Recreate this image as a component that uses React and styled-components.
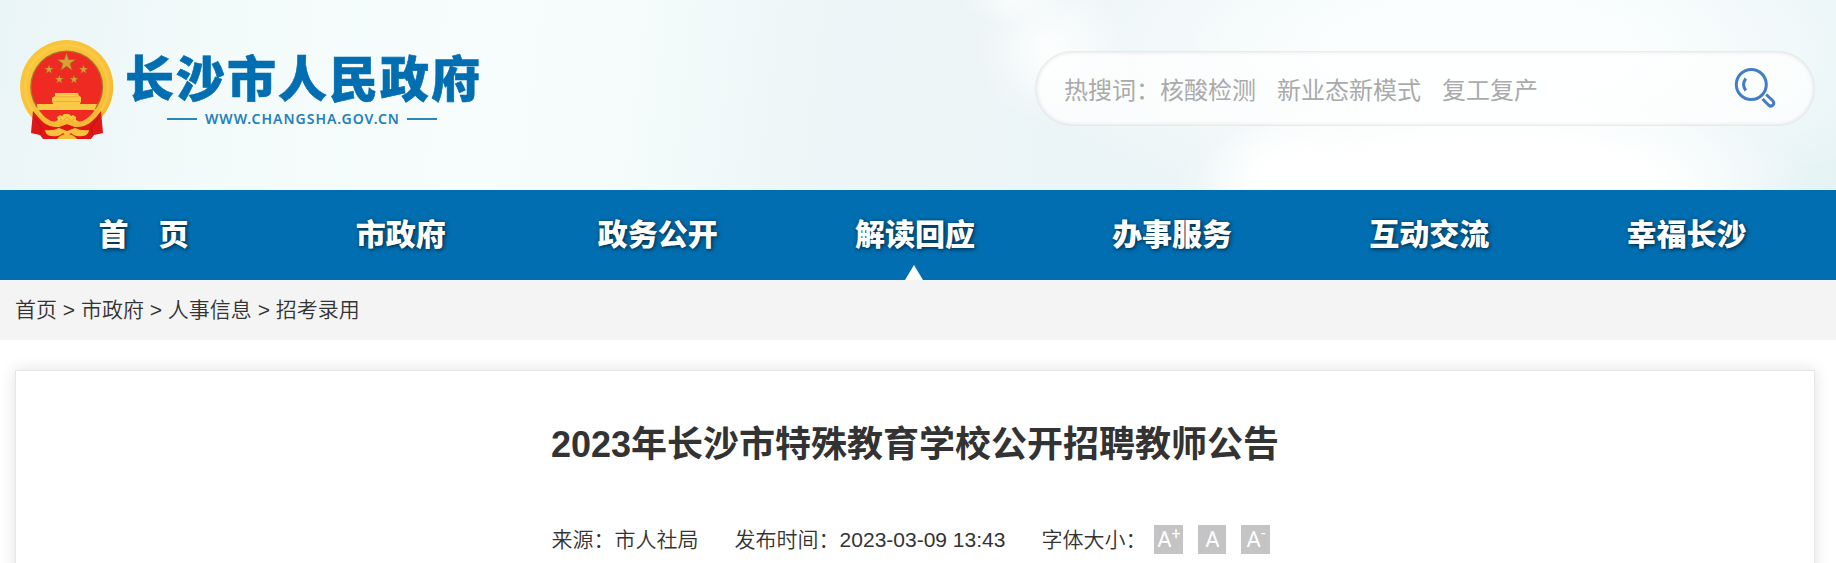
import React from 'react'
import styled, { createGlobalStyle } from 'styled-components';

const navItems = ["首\u3000页", "市政府", "政务公开", "解读回应", "办事服务", "互动交流", "幸福长沙"]
const crumbs = ["首页", "市政府", "人事信息", "招考录用"]
const hotWords = ["核酸检测", "新业态新模式", "复工复产"]
const star = "0,-10 2.3,-3.1 9.5,-3.1 3.7,1.2 5.9,8.1 0,3.9 -5.9,8.1 -3.7,1.2 -9.5,-3.1 -2.3,-3.1"

const Emblem = () => (
  <svg width="94" height="99" viewBox="0 0 94 99">
    <defs>
      <linearGradient id="gold" x1="0" y1="0" x2="1" y2="1">
        <stop offset="0" stopColor="#fbc838" />
        <stop offset="0.5" stopColor="#f8c23a" />
        <stop offset="1" stopColor="#f5b62c" />
      </linearGradient>
    </defs>
    <circle cx="46.700" cy="46.700" r="46.600" fill="url(#gold)" />
    <circle cx="46.700" cy="46.700" r="41.5" fill="none" stroke="#fbd055" strokeWidth="3" opacity="0.5" />
    <circle cx="46.700" cy="47" r="36.5" fill="#a8742a" />
    <circle cx="46.700" cy="47" r="35.2" fill="#ee2a22" />
    <g fill="#d9a038" stroke="#a0691f" strokeWidth="0.8">
      <polygon points={star} transform="translate(46.5 22.5) scale(0.98)" />
      <polygon points={star} transform="translate(29 29.5) scale(0.48)" />
      <polygon points={star} transform="translate(63.5 29.5) scale(0.48)" />
      <polygon points={star} transform="translate(39.3 39.5) scale(0.46)" />
      <polygon points={star} transform="translate(54 39.5) scale(0.46)" />
    </g>
    <path d="M35 53h23l1 3 2 1v4l-1 3h17l-2.500 6h-57L17 64h16l-1-3v-3l3-2z" fill="#fcc947" />
    <path d="M35 56.800h23M33 61.500h27" stroke="#e5a035" strokeWidth="0.7" />
    <path d="M20 71h54Q68 80 59 82q-4-8-12-8t-12 8Q25 80 20 71z" fill="#ee2a22" />
    <path d="M37 77l3-2 2 1 2-2h5l2 2 2-1 3 2v3l3 2-4 2-8 3-8-3-4-2 3-2z" fill="#fbc83c" />
    <path d="M40 79l3 2 4-4 4 4 3-2" fill="none" stroke="#d99624" strokeWidth="0.8" />
    <path d="M13 71q10 14 25 16l9-3 9 3q16-2 25-16l2 22-9 2-3 4H23l-3-4-9-2z" fill="#df1717" />
    <path d="M14 77l8 11-2 7M79 77l-8 11 2 7" fill="none" stroke="#b91214" strokeWidth="1" />
    <path d="M14 69Q24 83 39 82l4-2h8l4 2Q70 83 80 69q-8 19-25 18l-8-3-8 3Q22 88 14 69z" fill="#f6ba32" />
    <path d="M25 90q8 1 14-2l8 3 8-3q6 3 14 2-1 6-7 6-7 1-11-3l-4 3-4-3q-4 4-11 3-6 0-7-6z" fill="#fac23c" />
    <path d="M37 99q4-5 10-5t10 5z" fill="#f6bd39" />
  </svg>
)

const App = () => {
  return (
    <Wrapper>
      <GlobalStyle />
      <Header>
        <Logo>
          <Emblem />
          <LogoText>
            <SiteName>长沙市人民政府</SiteName>
            <SiteUrl><i /><span>WWW.CHANGSHA.GOV.CN</span><i /></SiteUrl>
          </LogoText>
        </Logo>
        <Search>
          <HotWords>
            热搜词：{hotWords.map((word) => <span key={word}>{word}</span>)}
          </HotWords>
          <svg width="42" height="42" viewBox="0 0 42 42" fill="none" stroke="#447dc4" strokeWidth="3">
            <circle cx="17.300" cy="16.500" r="15" />
            <path d="M11.800 10.500q-4.500 6 0 12M28.500 31l6 6q2.700 2.200 4.500 0 1.800-2-.5-4.500l-6.300-6" />
          </svg>
        </Search>
      </Header>

      <Nav>
        <NavList>
          {navItems.map((item) => (
            <NavItem key={item} $active={item === "解读回应"}>{item}</NavItem>
          ))}
        </NavList>
      </Nav>

      <Crumbs>{crumbs.join(" > ")}</Crumbs>

      <Article>
        <Title>2023年长沙市特殊教育学校公开招聘教师公告</Title>
        <Meta>
          <span>来源：市人社局</span>
          <span>发布时间：2023-03-09 13:43</span>
          <Sizes>
            字体大小：
            <SizeButton>A<sup>+</sup></SizeButton>
            <SizeButton $narrow>A</SizeButton>
            <SizeButton>A<sup>-</sup></SizeButton>
          </Sizes>
        </Meta>
      </Article>
    </Wrapper>
  )
}

const GlobalStyle = createGlobalStyle`
*{
    margin: 0;
    padding: 0;
    box-sizing: border-box;
}
body{
    overflow: hidden;
    background: #fff;
}
`

const Wrapper = styled.div`
height: 563px;
overflow: hidden;
color: #333;
font-family: "Liberation Sans", "Noto Sans CJK SC", sans-serif;
font-size: 21px;
`

const Header = styled.header`
display: flex;
justify-content: space-between;
height: 190px;
padding: 0 21px 0 20px;
background:
    radial-gradient(ellipse 100px 75px at 1300px 185px, #fff 35%, rgba(255, 255, 255, 0) 100%),
    radial-gradient(ellipse 320px 90px at 1490px 185px, #fff 50%, rgba(255, 255, 255, 0) 100%),
    radial-gradient(ellipse 75px 75px at 1050px 50px, rgba(255, 255, 255, 0.8) 10%, rgba(255, 255, 255, 0) 100%),
    radial-gradient(ellipse 50px 25px at 1010px 0px, rgba(255, 255, 255, 0.6) 10%, rgba(255, 255, 255, 0) 100%),
    radial-gradient(ellipse 480px 170px at 1480px 50px, rgba(251, 254, 254, 0.95) 30%, rgba(251, 254, 254, 0) 100%),
    linear-gradient(97deg, #eaf5f7 0, #f3fafa 220px, #f6fdfc 480px, #f5fcfb 620px, #edf5f7 820px, #ebf4f6 1150px, #eef6f8 1500px, #e6f3f5 1850px);
`

const Logo = styled.div`
display: flex;
padding-top: 40px;
gap: 11px;
`

const LogoText = styled.div`
width: 356px;
`

const SiteName = styled.h1`
height: 50px;
margin-top: 11px;
color: #006eb0;
font: 900 49px/50px "Noto Sans CJK SC", sans-serif;
letter-spacing: 2px;
white-space: nowrap;
-webkit-text-stroke: 0.6px #006eb0;
`

const SiteUrl = styled.div`
display: flex;
align-items: center;
gap: 8px;
height: 18px;
margin-top: 9px;
padding-left: 42px;
color: #2580bb;
font: 600 14px/18px "Noto Sans", sans-serif;
letter-spacing: 1px;
white-space: nowrap;

i{
    width: 30px;
    height: 2px;
    background: #2b86bd;
}
span{
    width: 194px;
}
`

const Search = styled.div`
display: flex;
align-items: center;
justify-content: space-between;
width: 780px;
height: 75px;
margin-top: 51px;
padding: 0 39px 0 29px;
border-radius: 38px;
background: rgba(255, 255, 255, 0.7);
box-shadow: inset 0 0 5px rgba(0, 0, 0, 0.18);
`

const HotWords = styled.div`
color: #aaa;
font-size: 24px;
white-space: nowrap;

span{
    margin-right: 21px;
}
`

const Nav = styled.nav`
height: 90px;
padding: 0 21px 0 15px;
background: #006eb0;
`

const NavList = styled.ul`
display: grid;
grid-template-columns: repeat(7, 1fr);
list-style: none;
`

const NavItem = styled.li`
position: relative;
height: 90px;
color: #fff;
font-size: 30px;
font-weight: 900;
line-height: 90px;
text-align: center;
text-shadow: 1px 1px 4px rgba(0, 0, 0, 0.7);

&::after{
    content: "";
    display: ${(props) => (props.$active ? "block" : "none")};
    position: absolute;
    bottom: 0;
    left: calc(50% - 10px);
    border: 9.500px solid transparent;
    border-top: 0;
    border-bottom: 15px solid #fff;
}
`

const Crumbs = styled.div`
height: 60px;
padding-left: 15px;
background: #f4f4f4;
font-weight: 350;
line-height: 59px;
`

const Article = styled.main`
width: 1800px;
height: 300px;
margin: 30px 0 0 15px;
border: 1px solid #e6e6e6;
box-shadow: 0 0 15px rgba(0, 0, 0, 0.12);
text-align: center;
`

const Title = styled.h2`
margin-top: 47px;
font-size: 36px;
line-height: 54px;
`

const Meta = styled.div`
display: flex;
align-items: center;
justify-content: center;
gap: 36px;
height: 30px;
margin-top: 53px;
padding-right: 8px;
font-weight: 350;
line-height: 29px;

> span{
    height: 30px;
}
`

const Sizes = styled.div`
display: flex;
height: 30px;
`

const SizeButton = styled.button`
display: flex;
justify-content: center;
width: ${(props) => (props.$narrow ? "28px" : "29px")};
height: 29px;
margin-left: 15px;
border: 0;
background: #c4c4c4;
color: #fff;
font: 22px/29px Roboto, sans-serif;

&:first-of-type{
    margin-left: 8px;
}
sup{
    font-size: 16px;
    line-height: 17px;
}
`

export default App;
